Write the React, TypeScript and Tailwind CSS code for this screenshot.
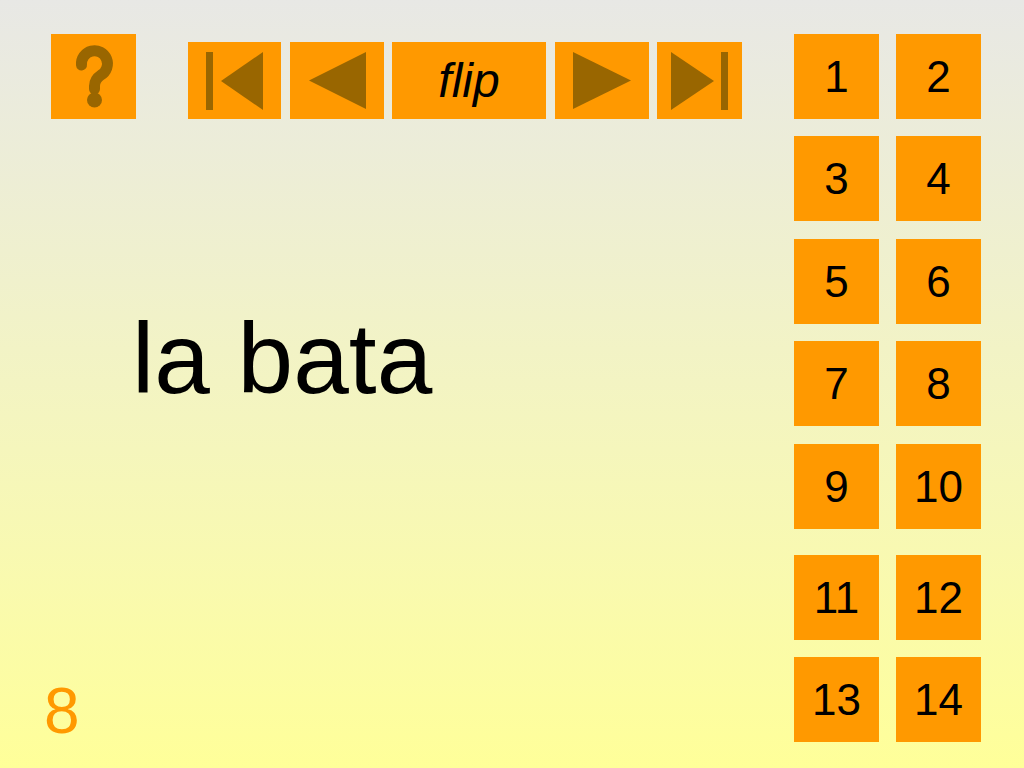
import React from "react";

const ICON = "#996600";

const navButtons = [
  { key: "first", width: "w-[93px]", gap: "" },
  { key: "prev", width: "w-[94px]", gap: "ml-[9px]" },
  { key: "flip", width: "w-[154px]", gap: "ml-[8px]" },
  { key: "next", width: "w-[94px]", gap: "ml-[9px]" },
  { key: "last", width: "w-[85px]", gap: "ml-[8px]" },
];

function NavIcon({ kind }: { kind: string }) {
  if (kind === "first") {
    return (
      <svg width="93" height="77" viewBox="0 0 93 77">
        <rect x="18" y="10" width="7" height="58" fill={ICON} />
        <polygon points="33,39 75,10 75,68" fill={ICON} />
      </svg>
    );
  }
  if (kind === "prev") {
    return (
      <svg width="94" height="77" viewBox="0 0 94 77">
        <polygon points="19,38.5 76,10 76,67" fill={ICON} />
      </svg>
    );
  }
  if (kind === "next") {
    return (
      <svg width="94" height="77" viewBox="0 0 94 77">
        <polygon points="18,10 76,38.5 18,67" fill={ICON} />
      </svg>
    );
  }
  if (kind === "last") {
    return (
      <svg width="85" height="77" viewBox="0 0 85 77">
        <polygon points="14,10 57,39 14,68" fill={ICON} />
        <rect x="64" y="10" width="7" height="58" fill={ICON} />
      </svg>
    );
  }
  return (
    <span className="text-[48px] italic leading-none text-black">flip</span>
  );
}

function HelpIcon() {
  return (
    <svg width="85" height="85" viewBox="0 0 85 85">
      <path
        d="M30.5 31 A13 13 0 1 1 50 41 C 45.5 44 43.5 47 43.5 52 V 55"
        fill="none"
        stroke={ICON}
        strokeWidth="11"
        strokeLinecap="round"
      />
      <circle cx="43.5" cy="66" r="7.5" fill={ICON} />
    </svg>
  );
}

const rows = [
  { nums: [1, 2], mt: "" },
  { nums: [3, 4], mt: "mt-[17px]" },
  { nums: [5, 6], mt: "mt-[18px]" },
  { nums: [7, 8], mt: "mt-[17px]" },
  { nums: [9, 10], mt: "mt-[18px]" },
  { nums: [11, 12], mt: "mt-[26px]" },
  { nums: [13, 14], mt: "mt-[17px]" },
];

export default function App() {
  return (
    <div
      className="flex h-[768px] w-[1024px] overflow-hidden bg-gradient-to-b from-[#e8e8e5] to-[#ffff99]"
      style={{ fontFamily: '"Liberation Sans", Arial, sans-serif' }}
    >
      {/* left side */}
      <div className="flex flex-1 flex-col">
        <div className="ml-[51px] mt-[34px] flex items-start">
          <button className="flex h-[85px] w-[85px] items-center justify-center bg-[#ff9900]">
            <HelpIcon />
          </button>
          <div className="ml-[52px] mt-[8px] flex">
            {navButtons.map((b) => (
              <button
                key={b.key}
                className={`${b.width} ${b.gap} flex h-[77px] items-center justify-center bg-[#ff9900]`}
              >
                <NavIcon kind={b.key} />
              </button>
            ))}
          </div>
        </div>

        <div className="ml-[132px] mt-[189px] text-[100px] leading-none text-black">
          la bata
        </div>

        <div className="mb-[25px] ml-[44px] mt-auto text-[64px] leading-none text-[#ff9900]">
          8
        </div>
      </div>

      {/* number grid */}
      <div className="mr-[43px] mt-[34px] flex flex-col">
        {rows.map((r, i) => (
          <div key={i} className={`flex gap-[17px] ${r.mt}`}>
            {r.nums.map((n) => (
              <button
                key={n}
                className="flex h-[85px] w-[85px] items-center justify-center bg-[#ff9900] text-[44px] leading-none text-black"
              >
                {n}
              </button>
            ))}
          </div>
        ))}
      </div>
    </div>
  );
}
